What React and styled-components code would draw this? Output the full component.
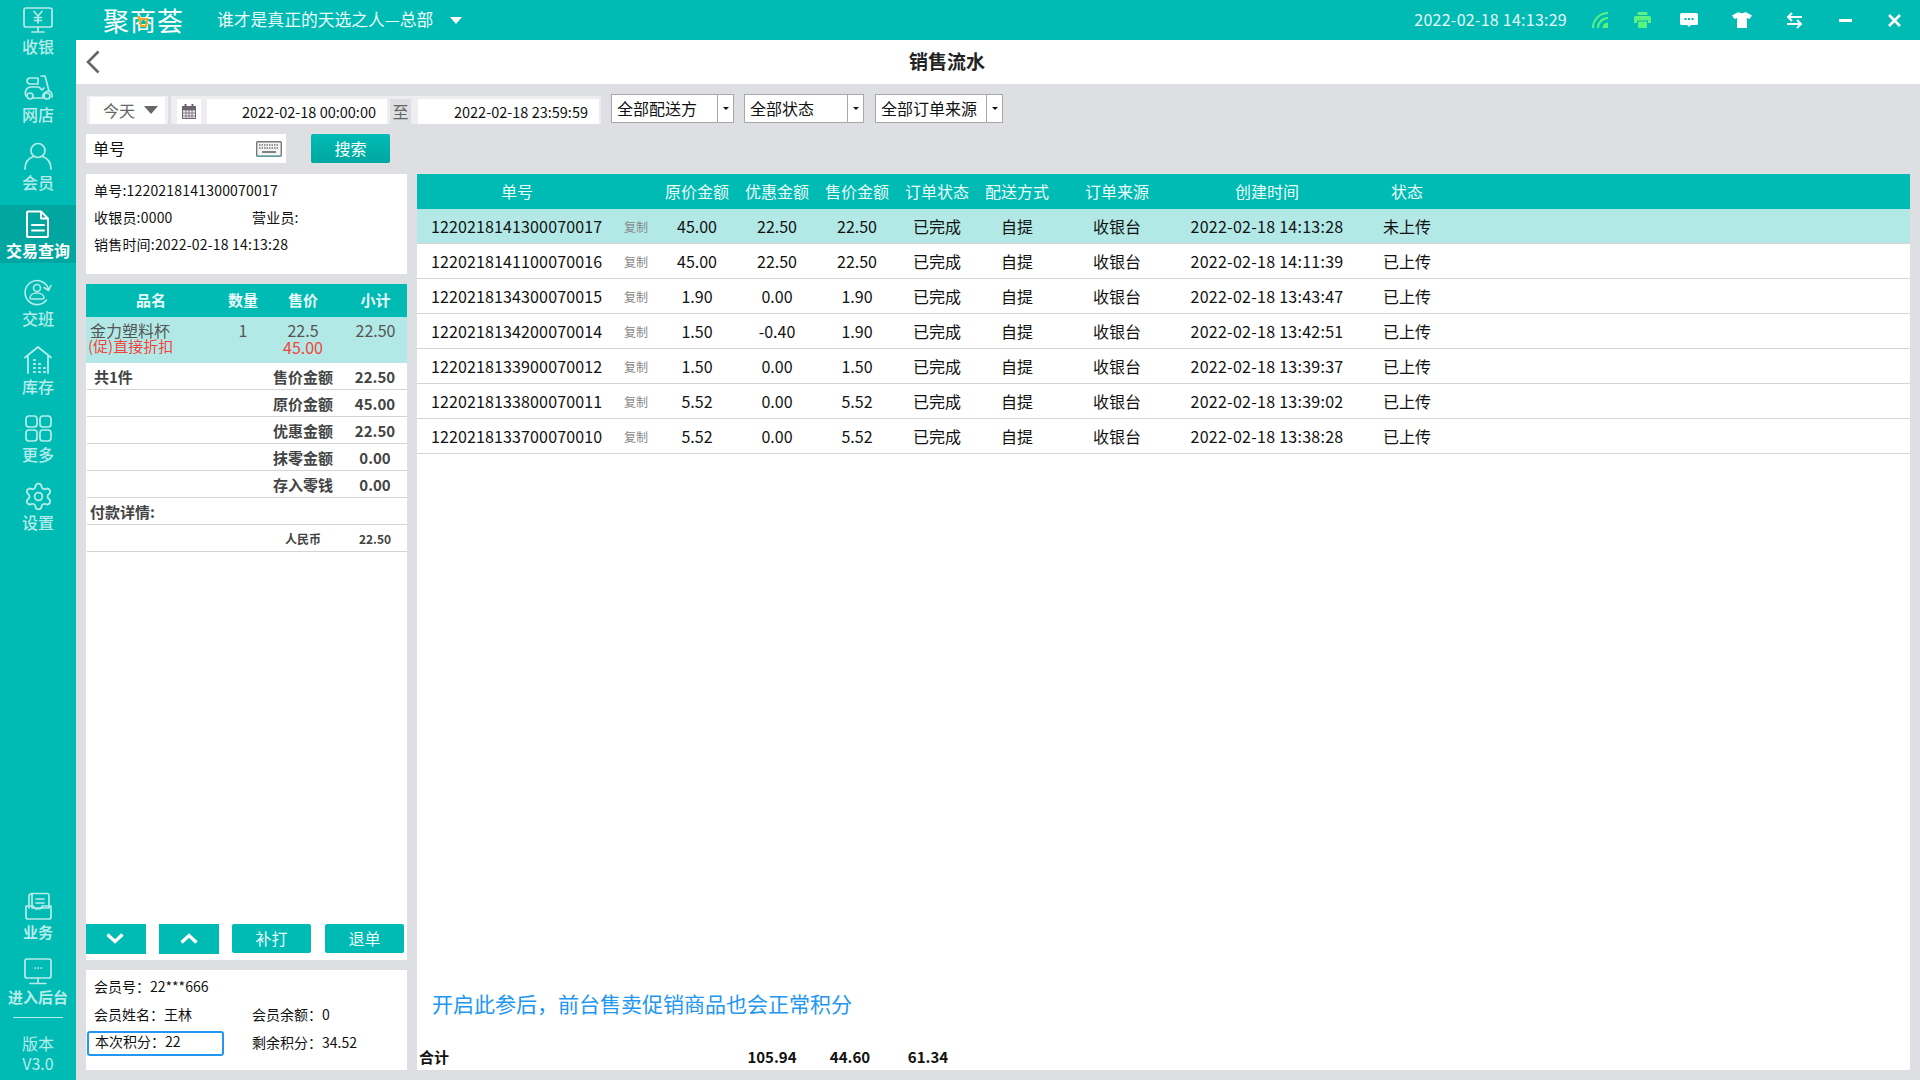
import React from "react";
import styled, { createGlobalStyle } from "styled-components";
import { Settings } from "lucide-react";

const teal = "#00bbb4";

const GlobalStyle = createGlobalStyle`
  html, body {
    margin: 0;
    padding: 0;
    width: 1920px;
    height: 1080px;
    overflow: hidden;
    font-family: "Noto Sans CJK SC", "Noto Sans", "Liberation Sans", sans-serif;
  }
  * { box-sizing: border-box; }
`;

const orders = [
  ["1220218141300070017", "45.00", "22.50", "22.50", "2022-02-18 14:13:28", "未上传"],
  ["1220218141100070016", "45.00", "22.50", "22.50", "2022-02-18 14:11:39", "已上传"],
  ["1220218134300070015", "1.90", "0.00", "1.90", "2022-02-18 13:43:47", "已上传"],
  ["1220218134200070014", "1.50", "-0.40", "1.90", "2022-02-18 13:42:51", "已上传"],
  ["1220218133900070012", "1.50", "0.00", "1.50", "2022-02-18 13:39:37", "已上传"],
  ["1220218133800070011", "5.52", "0.00", "5.52", "2022-02-18 13:39:02", "已上传"],
  ["1220218133700070010", "5.52", "0.00", "5.52", "2022-02-18 13:38:28", "已上传"],
];

const amounts = [
  ["售价金额", "22.50", "共1件"],
  ["原价金额", "45.00"],
  ["优惠金额", "22.50"],
  ["抹零金额", "0.00"],
  ["存入零钱", "0.00"],
];

const Page = styled.div`
  display: flex;
  width: 1920px;
  height: 1080px;
`;

const Sidebar = styled.nav`
  width: 76px;
  flex: none;
  display: flex;
  flex-direction: column;
  gap: 10px;
  padding-top: 1px;
  background: ${teal};
`;

const NavItem = styled.div`
  height: 58px;
  flex: none;
  padding-top: 5px;
  display: flex;
  flex-direction: column;
  align-items: center;
  color: ${(p) => (p.$active ? "#fff" : "#b5ece9")};
  background: ${(p) => (p.$active ? "#00a69f" : "transparent")};
`;

const NavIcon = styled.div`
  height: 28px;
  display: flex;
  align-items: center;
  justify-content: center;
`;

const NavLabel = styled.div`
  margin-top: 2px;
  font-size: ${(p) => p.$size || 16}px;
  line-height: 20px;
  font-weight: ${(p) => (p.$bold ? 700 : 500)};
  white-space: nowrap;
`;

const NavBottom = styled.div`
  margin-top: auto;
  display: flex;
  flex-direction: column;
  gap: 7px;
`;

const Version = styled.div`
  margin: 0 13px;
  padding-top: 15px;
  border-top: 1px solid #b5ece9;
  height: 63px;
  color: #b5ece9;
  font-size: 16px;
  line-height: 20px;
  text-align: center;
  white-space: nowrap;
`;

const Main = styled.div`
  flex: 1;
  min-width: 0;
  display: flex;
  flex-direction: column;
`;

const TopBar = styled.header`
  height: 40px;
  flex: none;
  display: flex;
  align-items: center;
  padding-left: 27px;
  background: ${teal};
  color: #fff;
`;

const Logo = styled.div`
  position: relative;
  width: 80px;
  font-size: 26px;
  line-height: 30px;
  font-weight: 400;
  letter-spacing: 1px;
  white-space: nowrap;
`;

const LogoCart = styled.svg`
  position: absolute;
  left: 33px;
  top: 11px;
`;

const StoreName = styled.div`
  margin-left: 34px;
  padding-bottom: 2px;
  font-size: 16.800px;
  color: #eafaf9;
  white-space: nowrap;
`;

const Caret = styled.span`
  margin-left: ${(p) => p.$gap || 17}px;
  width: 0;
  height: 0;
  border-left: ${(p) => p.$size || 6}px solid transparent;
  border-right: ${(p) => p.$size || 6}px solid transparent;
  border-top: ${(p) => (p.$size || 6) + 1}px solid ${(p) => p.$color || "#fff"};
`;

const Clock = styled.div`
  margin-left: auto;
  padding-bottom: 2px;
  font-size: 16px;
  letter-spacing: 0.25px;
  color: #e6f8f7;
  white-space: nowrap;
`;

const TopIcons = styled.div`
  display: flex;
  align-items: center;
  margin-left: 25px;
  padding-right: 19px;
`;

const TopIcon = styled.span`
  display: flex;
  margin-left: ${(p) => p.$gap || 0}px;
`;

const TitleBar = styled.div`
  height: 44px;
  flex: none;
  display: grid;
  grid-template-columns: 50px 1fr 152px;
  align-items: center;
  padding-bottom: 2px;
  background: #fff;
`;

const Back = styled.div`
  padding-left: 10px;
  padding-top: 2px;
  display: flex;
`;

const Title = styled.h1`
  margin: 0;
  font-size: 19px;
  font-weight: 700;
  line-height: 26px;
  color: #222;
  text-align: center;
`;

const Content = styled.div`
  flex: 1;
  min-height: 0;
  display: flex;
  flex-direction: column;
  padding: 10px;
  background: #dedfe3;
`;

const FilterRow = styled.div`
  display: flex;
  align-items: flex-end;
  height: 30px;
  flex: none;
  padding-left: 1px;
`;

const RangeSelect = styled.div`
  width: 81px;
  height: 28px;
  display: flex;
  align-items: center;
  padding: 0 0 2px 13px;
  background: #fff;
  border: solid #f0f0f2;
  border-width: 1px 3px 0 3px;
  font-size: 16px;
  color: #666;
`;

const DateGroup = styled.div`
  margin-left: 3px;
  width: 430px;
  height: 28px;
  display: flex;
  align-items: stretch;
  padding: 3px 2px 0 6px;
  background: #eeeef0;
`;

const CalendarBox = styled.div`
  width: 24px;
  display: flex;
  align-items: center;
  justify-content: center;
  background: #fff;
`;

const DateBox = styled.div`
  width: ${(p) => p.$w}px;
  margin-left: ${(p) => p.$gap}px;
  padding-right: 11px;
  display: flex;
  align-items: center;
  justify-content: flex-end;
  background: #fff;
  font-size: 14.500px;
  color: #111;
  white-space: nowrap;
`;

const To = styled.div`
  width: 21px;
  margin-left: 3px;
  padding-bottom: 2px;
  display: flex;
  align-items: center;
  justify-content: center;
  background: #dedfe3;
  font-size: 16px;
  color: #666;
`;

const Dropdown = styled.div`
  width: ${(p) => p.$w}px;
  margin-left: ${(p) => p.$gap}px;
  margin-bottom: 1px;
  height: 29px;
  display: flex;
  align-items: center;
  justify-content: space-between;
  padding-left: 5px;
  background: #fff;
  border: 1px solid #a8a8a8;
  font-size: 16px;
  line-height: 24px;
  color: #111;
  white-space: nowrap;
`;

const DropText = styled.span`
  margin-top: -2px;
`;

const DropArrow = styled.div`
  width: 16px;
  align-self: stretch;
  display: flex;
  align-items: center;
  justify-content: center;
  border-left: 1px solid #a8a8a8;
  span {
    width: 0;
    height: 0;
    border-left: 3px solid transparent;
    border-right: 3px solid transparent;
    border-top: 3px solid #111;
  }
`;

const SearchRow = styled.div`
  display: flex;
  height: 29px;
  flex: none;
  margin-top: 10px;
  gap: 25px;
`;

const SearchInput = styled.div`
  width: 200px;
  display: flex;
  align-items: center;
  justify-content: space-between;
  padding: 0 4px 0 7px;
  background: #fff;
  font-size: 16px;
  line-height: 24px;
  color: #111;
`;

const SearchLabel = styled.span`
  margin-top: -2px;
`;

const SearchButton = styled.button`
  width: 79px;
  border: 0;
  border-radius: 2px;
  background: linear-gradient(#00bbb4, #00a7a0);
  color: #fff;
  font: inherit;
  font-size: 16px;
  padding: 0 0 2px;
`;

const Body = styled.div`
  flex: 1;
  min-height: 0;
  margin-top: 11px;
  display: grid;
  grid-template-columns: 321px 1fr;
  gap: 10px;
`;

const LeftColumn = styled.div`
  display: flex;
  flex-direction: column;
  gap: 10px;
  min-height: 0;
`;

const InfoCard = styled.div`
  height: 100px;
  flex: none;
  display: grid;
  grid-template-columns: 158px 1fr;
  grid-auto-rows: 27px;
  align-items: center;
  align-content: start;
  padding: 2px 0 0 8px;
  background: #fff;
  font-size: 14px;
  letter-spacing: 0.2px;
  color: #111;
  white-space: nowrap;
`;

const InfoWide = styled.div`
  grid-column: 1 / -1;
`;

const SaleCard = styled.div`
  flex: 1;
  min-height: 0;
  display: flex;
  flex-direction: column;
  background: #fff;
`;

const goodsColumns = "130px 54px 66px 71px";

const GoodsHead = styled.div`
  height: 33px;
  flex: none;
  display: grid;
  grid-template-columns: ${goodsColumns};
  align-items: center;
  padding-bottom: 2px;
  background: ${teal};
  color: #eafaf9;
  font-size: 15px;
  font-weight: 700;
  text-align: center;
  span:last-child {
    padding-left: 8px;
  }
`;

const GoodsRow = styled.div`
  height: 46px;
  flex: none;
  display: grid;
  grid-template-columns: ${goodsColumns};
  grid-auto-rows: 16px;
  padding-top: 5px;
  background: #b2e9e6;
  font-size: 16px;
  line-height: 16px;
  color: #555;
  text-align: center;
  white-space: nowrap;
`;

const GoodsName = styled.span`
  text-align: left;
  padding-left: 4px;
`;

const Promo = styled.span`
  text-align: left;
  padding-left: 2px;
  font-size: 15px;
  color: #f4433c;
  grid-column: 1 / 3;
`;

const OldPrice = styled.span`
  padding-top: 1px;
  font-size: 16px;
  color: #f4433c;
`;

const Subtotal = styled.span`
  padding-left: 8px;
`;

const AmountRow = styled.div`
  height: 27px;
  flex: none;
  display: grid;
  grid-template-columns: 1fr auto 64px;
  align-items: center;
  margin-left: 1px;
  border-bottom: 1px solid #d4d4d4;
  font-size: ${(p) => (p.$small ? 12 : 15)}px;
  font-weight: 700;
  color: #444;
  white-space: nowrap;
`;

const AmountNote = styled.span`
  padding-left: ${(p) => p.$pad || 7}px;
`;

const AmountLabel = styled.span`
  padding-right: ${(p) => p.$pad || 0}px;
  margin-right: 10px;
`;

const AmountValue = styled.span`
  text-align: center;
`;

const Actions = styled.div`
  margin-top: auto;
  display: flex;
  align-items: flex-start;
  gap: 13px;
  padding-bottom: 6px;
`;

const ArrowButton = styled.button`
  width: 60px;
  height: 30px;
  padding: 0 ${(p) => (p.$down ? 3 : 0)}px 2px 0;
  border: 0;
  background: ${teal};
  display: flex;
  align-items: center;
  justify-content: center;
`;

const ActionButton = styled.button`
  width: 79px;
  height: 29px;
  padding: 0 0 2px;
  border: 0;
  border-radius: 2px;
  background: ${teal};
  color: #e6f8f7;
  font: inherit;
  font-size: 16px;
  margin-left: ${(p) => p.$gap || 0}px;
`;

const MemberCard = styled.div`
  height: 100px;
  flex: none;
  display: grid;
  grid-template-columns: 158px 1fr;
  grid-auto-rows: 28px;
  align-items: center;
  align-content: start;
  padding: 2px 0 0 8px;
  background: #fff;
  font-size: 14px;
  color: #111;
  white-space: nowrap;
`;

const PointsBox = styled.div`
  height: 25px;
  width: 137px;
  margin: 2px 0 0 -7px;
  padding-left: 6px;
  border: 2px solid #2196f3;
  border-radius: 3px;
  line-height: 17px;
`;

const ListCard = styled.div`
  display: flex;
  flex-direction: column;
  min-height: 0;
  background: #fff;
`;

const orderColumns = "200px 40px 80px 80px 80px 80px 80px 120px 180px 100px 1fr";

const ListHead = styled.div`
  height: 35px;
  flex: none;
  display: grid;
  grid-template-columns: ${orderColumns};
  align-items: center;
  padding-bottom: 2px;
  background: ${teal};
  color: #eafaf9;
  font-size: 16px;
  text-align: center;
  white-space: nowrap;
`;

const ListRow = styled.div`
  height: 35px;
  flex: none;
  display: grid;
  grid-template-columns: ${orderColumns};
  align-items: center;
  border-bottom: 1px solid #d4d4d4;
  background: ${(p) => (p.$selected ? "#b2e9e6" : "#fff")};
  font-size: 16px;
  color: #111;
  text-align: center;
  white-space: nowrap;
`;

const OrderNo = styled.span`
  text-align: left;
  padding-left: 14px;
  letter-spacing: 0.13px;
`;

const Copy = styled.span`
  padding-right: 2px;
  font-size: 12px;
  color: #888;
`;

const CreatedAt = styled.span`
  letter-spacing: 0.26px;
`;

const Notice = styled.div`
  margin-top: auto;
  padding-left: 15px;
  font-size: 21px;
  line-height: 30px;
  color: #2196f3;
`;

const Totals = styled.div`
  height: 26px;
  margin-top: 26px;
  flex: none;
  display: grid;
  grid-template-columns: 314px 78px 78px 78px;
  align-items: center;
  padding: 0 0 2px 2px;
  font-size: 15px;
  font-weight: 700;
  color: #111;
  text-align: center;
  span:first-child {
    text-align: left;
  }
`;

const stroke = {
  fill: "none",
  stroke: "currentColor",
  strokeWidth: 1.7,
  strokeLinecap: "round",
  strokeLinejoin: "round",
};

const NavSvg = ({ children, sw }) => (
  <svg width="32" height="28" viewBox="0 0 32 28" {...stroke} strokeWidth={sw || 1.7}>
    {children}
  </svg>
);

const CashIcon = () => (
  <NavSvg>
    <rect x="2" y="2" width="28" height="19" rx="2" />
    <path d="M12 5.5l4 4.5 4-4.5M16 10v7M12.5 11.5h7M12.5 14.5h7M16 21v4M10 26h12" />
  </NavSvg>
);

const ScooterIcon = () => (
  <NavSvg>
    <circle cx="8" cy="22" r="3" />
    <circle cx="25" cy="22" r="3" />
    <path d="M8 4h8v6H8a2 2 0 0 1 0-6zM19 2h4l4 15a5 5 0 0 1 3 6M4 22c-2-5 1-9 5-9h7c2 0 3 2 4 3l2-2M11 24h10c-1-3 1-6 5-7" />
  </NavSvg>
);

const MemberIcon = () => (
  <NavSvg>
    <circle cx="16" cy="8.5" r="7" />
    <path d="M3 27c0-7 4-11 8.500-12.500M29 27c0-7-4-11-8.500-12.500" />
  </NavSvg>
);

const OrderIcon = () => (
  <NavSvg sw={2}>
    <path d="M6 1.500h13l7 7V26a1 1 0 0 1-1 1H6a1 1 0 0 1-1-1V2.500a1 1 0 0 1 1-1zM19 1.500v7h7M10 15h12M10 20.500h12" />
  </NavSvg>
);

const ShiftIcon = () => (
  <NavSvg sw={1.6}>
    <path d="M24.500 22a12 12 0 1 1 2-11M29 7.500l-2.500 5-4.500-3" />
    <circle cx="15" cy="10" r="3.500" />
    <path d="M8 20c0-3 3-5 7-5s7 2 7 5c0 1-1 1-1.500 1h-11C9 21 8 21 8 20z" />
  </NavSvg>
);

const StockIcon = () => (
  <NavSvg sw={1.8}>
    <path d="M3 11.500L16 1l13 10.500M6 9v18M26 9v18" />
    <path d="M12 14h1M12 18h1M17 18h1M12 22h1M12 26h1M17 22h1M17 26h1M22 26h1M22 22h1" strokeWidth="2.200" />
  </NavSvg>
);

const MoreIcon = () => (
  <NavSvg>
    <rect x="4" y="2" width="11" height="11" rx="3" />
    <rect x="18" y="2" width="11" height="11" rx="3" />
    <rect x="4" y="16" width="11" height="11" rx="3" />
    <rect x="18" y="16" width="11" height="11" rx="3" />
  </NavSvg>
);

const BusinessIcon = () => (
  <NavSvg>
    <path d="M10 1.500h15a2 2 0 0 1 2 2V16h-17zM10 1.500c-2 0-3 1-3 3V16" />
    <path d="M4 14v11a2 2 0 0 0 2 2h21a2 2 0 0 0 2-2V14c0 0-8 0-9 0 0 2-2 3-4.500 3S12 16 11 14z" />
    <path d="M14 7h8M14 11h8" />
  </NavSvg>
);

const BackendIcon = () => (
  <NavSvg>
    <rect x="3" y="2" width="26" height="19" rx="2" />
    <path d="M16 21v5M8 26.500h16" />
    <path d="M13 11h.4M16 11h.4M19 11h.4" />
  </NavSvg>
);

const WifiIcon = () => (
  <svg width="16" height="16" viewBox="0 0 16 16" fill="none" stroke="#5cf27f" strokeWidth="2">
    <path d="M1 16A15 15 0 0 1 16 1M6 16A10 10 0 0 1 16 6" />
    <path d="M10.500 16a5.500 5.500 0 0 1 5.500-5.500V16z" fill="#5cf27f" stroke="none" />
  </svg>
);

const PrinterIcon = () => (
  <svg width="17" height="16" viewBox="0 0 17 16" fill="#5cf27f">
    <rect x="3.500" y="0" width="10" height="3" rx="1" />
    <path d="M1.500 4h14a1.500 1.500 0 0 1 1.500 1.500V11h-3V8.500H3V11H0V5.500A1.500 1.500 0 0 1 1.500 4z" />
    <rect x="4" y="9.500" width="9" height="6.500" rx="1" />
  </svg>
);

const ChatIcon = () => (
  <svg width="18" height="15" viewBox="0 0 18 15" fill="#fff">
    <path d="M1.500 0h15A1.500 1.500 0 0 1 18 1.500v9a1.500 1.500 0 0 1-1.500 1.500H11l-2 2-2-2H1.500A1.500 1.500 0 0 1 0 10.500v-9A1.500 1.500 0 0 1 1.500 0z" />
    <path fill={teal} d="M4.500 5h2v2h-2zM8 5h2v2H8zM11.500 5h2v2h-2z" />
  </svg>
);

const ShirtIcon = () => (
  <svg width="20" height="16" viewBox="0 0 20 16" fill="#fff">
    <path d="M6.500 0c1 1.500 6 1.500 7 0L20 3.500 17.500 7 15 6v10H5V6L2.500 7 0 3.500z" />
  </svg>
);

const SwapIcon = () => (
  <svg width="17" height="17" viewBox="0 0 17 17" fill="none" stroke="#fff" strokeWidth="2">
    <path d="M16 5H2M6 1L2 5l4 4" />
    <path d="M1 12h14M11 8l4 4-4 4" />
  </svg>
);

const MinIcon = () => (
  <svg width="13" height="3" viewBox="0 0 13 3" fill="#fff">
    <rect width="13" height="3" />
  </svg>
);

const CloseIcon = () => (
  <svg width="13" height="13" viewBox="0 0 13 13" stroke="#fff" strokeWidth="2.600">
    <path d="M1 1l11 11M12 1L1 12" />
  </svg>
);

const CalendarIcon = () => (
  <svg width="14" height="15" viewBox="0 0 14 15" fill="none" stroke="#6a6570">
    <rect x=".5" y="2.500" width="13" height="12" fill="#f3e9ee" />
    <path d="M.5 6h13M.5 9h13M.5 12h13M4 6v8.500M7 6v8.500M10 6v8.500" strokeWidth=".8" />
    <rect x="0" y="2" width="14" height="4" fill="#6a6570" stroke="none" />
    <path d="M3.500 0v3M10.500 0v3" strokeWidth="2" />
  </svg>
);

const KeyboardIcon = () => (
  <svg width="26" height="16" viewBox="0 0 26 16" fill="none">
    <rect x=".7" y=".7" width="24.600" height="14.600" rx="1" stroke="#777" strokeWidth="1.400" fill="#f4f4f4" />
    <path d="M3 4h20M3 7h20" stroke="#777" strokeWidth="1.600" strokeDasharray="1.500 1" />
    <path d="M6 11h14" stroke="#777" strokeWidth="1.800" />
    <path d="M1 15h24" stroke="#5bb" strokeWidth="1" />
  </svg>
);

const ChevronLeft = () => (
  <svg width="14" height="24" viewBox="0 0 14 24" fill="none" stroke="#666" strokeWidth="2.600">
    <path d="M12.500 1.500L2 12l10.500 10.500" />
  </svg>
);

const Chevron = ({ up }) => (
  <svg width="18" height="11" viewBox="0 0 18 11" fill="none" stroke="#fff" strokeWidth="3.400">
    <path d={up ? "M1.500 9.500L9 2.500l7.500 7" : "M1.500 1.500L9 8.500l7.500-7"} />
  </svg>
);

const navTop = [
  ["收银", <CashIcon />],
  ["网店", <ScooterIcon />],
  ["会员", <MemberIcon />],
  ["交易查询", <OrderIcon />, true],
  ["交班", <ShiftIcon />],
  ["库存", <StockIcon />],
  ["更多", <MoreIcon />],
  ["设置", <Settings size={31} strokeWidth={1.4} />],
];

const App = () => {
  return (
    <Page>
      <GlobalStyle />
      <Sidebar>
        {navTop.map(([label, icon, active]) => (
          <NavItem key={label} $active={active}>
            <NavIcon>{icon}</NavIcon>
            <NavLabel $bold={active}>{label}</NavLabel>
          </NavItem>
        ))}
        <NavBottom>
          <NavItem>
            <NavIcon>
              <BusinessIcon />
            </NavIcon>
            <NavLabel $size={15} $bold>
              业务
            </NavLabel>
          </NavItem>
          <NavItem>
            <NavIcon>
              <BackendIcon />
            </NavIcon>
            <NavLabel $size={15} $bold>
              进入后台
            </NavLabel>
          </NavItem>
          <Version>
            版本
            <br />
            V3.0
          </Version>
        </NavBottom>
      </Sidebar>

      <Main>
        <TopBar>
          <Logo>
            聚商荟
            <LogoCart width="12" height="11" viewBox="0 0 12 11" fill="none" stroke="#f2a516" strokeWidth="2">
              <path d="M1 1h2l2 9h5l1.500-7H3.500" />
            </LogoCart>
          </Logo>
          <StoreName>谁才是真正的天选之人—总部</StoreName>
          <Caret />
          <Clock>2022-02-18 14:13:29</Clock>
          <TopIcons>
            <TopIcon>
              <WifiIcon />
            </TopIcon>
            <TopIcon $gap={26}>
              <PrinterIcon />
            </TopIcon>
            <TopIcon $gap={29}>
              <ChatIcon />
            </TopIcon>
            <TopIcon $gap={34}>
              <ShirtIcon />
            </TopIcon>
            <TopIcon $gap={34}>
              <SwapIcon />
            </TopIcon>
            <TopIcon $gap={36}>
              <MinIcon />
            </TopIcon>
            <TopIcon $gap={36}>
              <CloseIcon />
            </TopIcon>
          </TopIcons>
        </TopBar>

        <TitleBar>
          <Back>
            <ChevronLeft />
          </Back>
          <Title>销售流水</Title>
        </TitleBar>

        <Content>
          <FilterRow>
            <RangeSelect>
              <span>今天</span>
              <Caret $gap={9} $size={7} $color="#666" />
            </RangeSelect>
            <DateGroup>
              <CalendarBox>
                <CalendarIcon />
              </CalendarBox>
              <DateBox $w={180} $gap={6}>
                2022-02-18 00:00:00
              </DateBox>
              <To>至</To>
              <DateBox $w={181} $gap={7}>
                2022-02-18 23:59:59
              </DateBox>
            </DateGroup>
            <Dropdown $w={123} $gap={10}>
              <DropText>全部配送方</DropText>
              <DropArrow>
                <span />
              </DropArrow>
            </Dropdown>
            <Dropdown $w={120} $gap={10}>
              <DropText>全部状态</DropText>
              <DropArrow>
                <span />
              </DropArrow>
            </Dropdown>
            <Dropdown $w={128} $gap={11}>
              <DropText>全部订单来源</DropText>
              <DropArrow>
                <span />
              </DropArrow>
            </Dropdown>
          </FilterRow>

          <SearchRow>
            <SearchInput>
              <SearchLabel>单号</SearchLabel>
              <KeyboardIcon />
            </SearchInput>
            <SearchButton>搜索</SearchButton>
          </SearchRow>

          <Body>
            <LeftColumn>
              <InfoCard>
                <InfoWide>单号:1220218141300070017</InfoWide>
                <span>收银员:0000</span>
                <span>营业员:</span>
                <InfoWide>销售时间:2022-02-18 14:13:28</InfoWide>
              </InfoCard>

              <SaleCard>
                <GoodsHead>
                  <span>品名</span>
                  <span>数量</span>
                  <span>售价</span>
                  <span>小计</span>
                </GoodsHead>
                <GoodsRow>
                  <GoodsName>金力塑料杯</GoodsName>
                  <span>1</span>
                  <span>22.5</span>
                  <Subtotal>22.50</Subtotal>
                  <Promo>(促)直接折扣</Promo>
                  <OldPrice>45.00</OldPrice>
                </GoodsRow>
                {amounts.map(([label, value, note]) => (
                  <AmountRow key={label}>
                    <AmountNote>{note}</AmountNote>
                    <AmountLabel>{label}</AmountLabel>
                    <AmountValue>{value}</AmountValue>
                  </AmountRow>
                ))}
                <AmountRow>
                  <AmountNote $pad={3}>付款详情:</AmountNote>
                </AmountRow>
                <AmountRow $small>
                  <span />
                  <AmountLabel $pad={12}>人民币</AmountLabel>
                  <AmountValue>22.50</AmountValue>
                </AmountRow>
                <Actions>
                  <ArrowButton $down>
                    <Chevron />
                  </ArrowButton>
                  <ArrowButton>
                    <Chevron up />
                  </ArrowButton>
                  <ActionButton>补打</ActionButton>
                  <ActionButton $gap={1}>退单</ActionButton>
                </Actions>
              </SaleCard>

              <MemberCard>
                <InfoWide>会员号：22***666</InfoWide>
                <span>会员姓名：王林</span>
                <span>会员余额：0</span>
                <PointsBox>本次积分：22</PointsBox>
                <span>剩余积分：34.52</span>
              </MemberCard>
            </LeftColumn>

            <ListCard>
              <ListHead>
                <span>单号</span>
                <span />
                <span>原价金额</span>
                <span>优惠金额</span>
                <span>售价金额</span>
                <span>订单状态</span>
                <span>配送方式</span>
                <span>订单来源</span>
                <span>创建时间</span>
                <span>状态</span>
              </ListHead>
              {orders.map((o, i) => (
                <ListRow key={o[0]} $selected={i === 0}>
                  <OrderNo>{o[0]}</OrderNo>
                  <Copy>复制</Copy>
                  <span>{o[1]}</span>
                  <span>{o[2]}</span>
                  <span>{o[3]}</span>
                  <span>已完成</span>
                  <span>自提</span>
                  <span>收银台</span>
                  <CreatedAt>{o[4]}</CreatedAt>
                  <span>{o[5]}</span>
                </ListRow>
              ))}
              <Notice>开启此参后，前台售卖促销商品也会正常积分</Notice>
              <Totals>
                <span>合计</span>
                <span>105.94</span>
                <span>44.60</span>
                <span>61.34</span>
              </Totals>
            </ListCard>
          </Body>
        </Content>
      </Main>
    </Page>
  );
};

export default App;
